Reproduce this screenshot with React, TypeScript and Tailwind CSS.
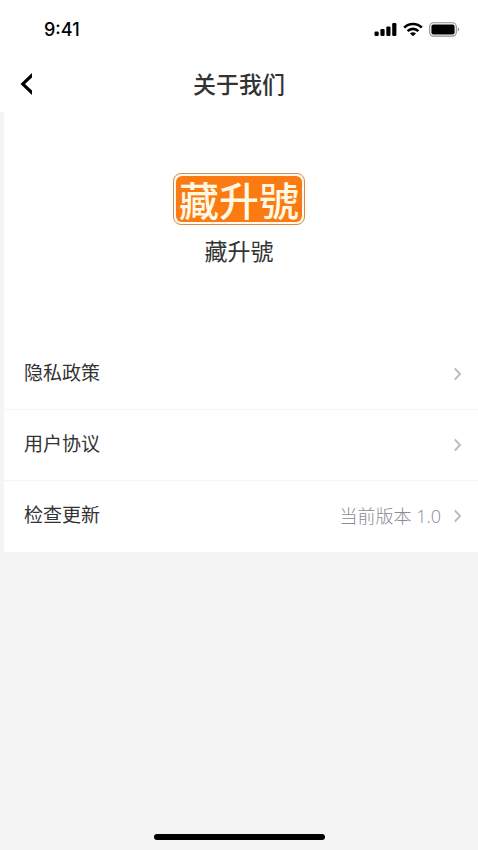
import type { ReactNode } from "react";

type RowProps = {
  label: string;
  href: string;
  children?: ReactNode;
};

function StatusBar() {
  return (
    <div className="flex h-14 items-center justify-between bg-white pr-[18px] pl-11">
      <span className="pt-[3px] font-['Inter',sans-serif] text-[18px] leading-6 font-medium text-black">
        9:41
      </span>
      <div className="flex items-center gap-[6px] pt-[3px]">
        <svg width="23" height="15" viewBox="0 0 23 15" aria-hidden="true">
          <rect x="0.5" y="9.5" width="4.2" height="4.5" rx="1.2" />
          <rect x="6.4" y="7" width="4.2" height="7" rx="1.2" />
          <rect x="12.3" y="4.4" width="4.2" height="9.6" rx="1.2" />
          <rect x="18.2" y="1" width="4.2" height="13" rx="1.2" />
        </svg>
        <svg width="20" height="15" viewBox="0 0 20 15" aria-hidden="true">
          <g fill="none" stroke="#000" strokeWidth="2.6">
            <path d="M1.2 5.7a12.4 12.4 0 0 1 17.6 0" />
            <path d="M4.6 9.1a7.6 7.6 0 0 1 10.8 0" />
          </g>
          <path d="M10 14.3 7 11.4a4.2 4.2 0 0 1 6 0z" />
        </svg>
        <svg width="31" height="15" viewBox="0 0 31 15" aria-hidden="true">
          <rect
            x="0.7"
            y="0.7"
            width="26.6"
            height="13.4"
            rx="3.8"
            fill="none"
            stroke="#8c8c8c"
            strokeWidth="1.1"
          />
          <rect x="2.4" y="2.4" width="23.2" height="10" rx="2" />
          <path d="M28.8 5.2v4.4a2.4 2.4 0 0 0 0-4.4z" fill="#8c8c8c" />
        </svg>
      </div>
    </div>
  );
}

function Header() {
  return (
    <header className="grid h-14 grid-cols-[56px_1fr_56px] items-center bg-white">
      <button type="button" aria-label="返回" className="flex h-14 items-center pl-5">
        <svg width="13" height="24" viewBox="0 0 13 24" aria-hidden="true">
          <path d="M12 1v4.6L5 12l7 6.4V23L0.5 12z" />
        </svg>
      </button>
      <h1 className="pb-[2px] text-center text-[23px] leading-8 font-medium">关于我们</h1>
    </header>
  );
}

function Logo() {
  return (
    <div className="rounded-lg border border-[#dc8a4c] bg-[#fffaf0] p-[2px]">
      <div className="flex h-[46px] w-[126px] items-center justify-center rounded-md bg-[#fb7b12] text-[40px] leading-[46px] font-medium text-[#fff8e4]">
        <span className="pb-px">藏升號</span>
      </div>
    </div>
  );
}

function Row({ label, href, children }: RowProps) {
  return (
    <li className="border-b border-[#f5f5f5] last:border-b-0">
      <a href={href} className="flex h-[70px] items-center pr-4 pl-5">
        <span className="flex-1 pb-1 text-[19px] leading-7">{label}</span>
        {children}
        <svg
          className="ml-3"
          width="9"
          height="14"
          viewBox="0 0 9 14"
          fill="none"
          stroke="#bdbdbd"
          strokeWidth="2"
          aria-hidden="true"
        >
          <path d="M1.8 1.4 7 7l-5.2 5.6" />
        </svg>
      </a>
    </li>
  );
}

export default function App() {
  return (
    <div className="flex min-h-screen flex-col bg-[#f4f4f4] font-['Noto_Sans_CJK_SC','Noto_Sans_CJK_TC',sans-serif] text-[#333333]">
      <StatusBar />
      <Header />

      <main className="ml-1 flex-1">
        <section className="flex flex-col items-center bg-white pt-[61px] pr-1 pb-[73px]">
          <Logo />
          <p className="mt-[9px] text-[23px] leading-8">藏升號</p>
        </section>

        <ul className="bg-white pb-px">
          <Row label="隐私政策" href="#privacy" />
          <Row label="用户协议" href="#terms" />
          <Row label="检查更新" href="#update">
            <span className="font-['Open_Sans','Noto_Sans_CJK_SC',sans-serif] text-[18px] leading-7 font-light text-[#8a8a94]">
              当前版本 1.0
            </span>
          </Row>
        </ul>
      </main>

      <footer className="flex justify-center pb-[10px]">
        <div className="h-[6px] w-[171px] rounded-full bg-black" />
      </footer>
    </div>
  );
}
